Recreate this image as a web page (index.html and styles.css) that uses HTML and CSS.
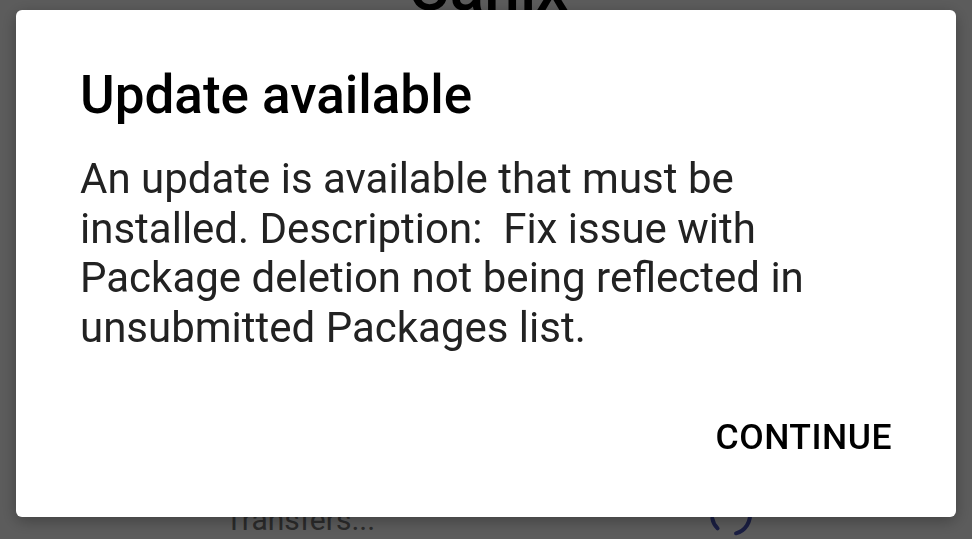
FILE: index.html
```html
<!DOCTYPE html>
<html lang="en">
<head>
    <meta charset="UTF-8">
    <meta name="viewport" content="width=device-width, initial-scale=1.0">
    <title>Canix</title>
    <link rel="stylesheet" href="styles.css">
</head>
<body>
    <div class="app">
        <div class="app-title">Canix</div>
        <div class="status-row">
            <span class="status-text">Transfers...</span>
            <svg class="spinner" width="48" height="48" viewBox="0 0 48 48">
                <circle cx="24" cy="24" r="19" fill="none" stroke="#4a55b8" stroke-width="4"
                        stroke-linecap="round" stroke-dasharray="27.5 19.9 11.6 200" transform="rotate(351 24 24)"/>
            </svg>
        </div>
    </div>

    <!-- dialog over dimmed screen -->
    <div class="scrim">
        <div class="dialog">
            <h1 class="dialog-title">Update available</h1>
            <p class="dialog-body">An update is available that must be installed. Description:&nbsp; Fix issue with Package deletion not being reflected in unsubmitted Packages list.</p>
            <div class="dialog-actions">
                <button class="dialog-button">CONTINUE</button>
            </div>
        </div>
    </div>
</body>
</html>
```

FILE: styles.css
```css
body {
    font-family: 'Roboto', 'Noto Sans', sans-serif;
    margin: 0;
    padding: 0;
    width: 972px;
    height: 539px;
    overflow: hidden;
    background: #fff;
}

.app {
    height: 539px;
    display: flex;
    flex-direction: column;
    justify-content: space-between;
}

.app-title {
    font-size: 64px;
    line-height: 64px;
    font-weight: 500;
    margin-top: -43px;
    padding-left: 408px;
    color: #000;
}

.status-row {
    display: flex;
    align-items: flex-start;
    padding-left: 225px;
    height: 48px;
}

.status-text {
    font-size: 30px;
    line-height: 36px;
    margin-top: 11px;
    color: #777;
    width: 482px;
}

.scrim {
    position: fixed;
    inset: 0;
    background: rgba(0, 0, 0, 0.64);
    padding: 10px 16px 22px;
    display: flex;
}

.dialog {
    flex: 1;
    background: #fff;
    border-radius: 6px;
    box-shadow: 0 4px 16px rgba(0, 0, 0, 0.3);
    padding: 54px 64px 60px;
    display: flex;
    flex-direction: column;
}

.dialog-title {
    margin: 0;
    font-size: 53px;
    line-height: 62px;
    font-weight: 500;
    color: #000;
}

.dialog-body {
    margin: 28px 0 0;
    font-size: 42px;
    line-height: 49.5px;
    color: #222;
}

.dialog-actions {
    margin-top: auto;
    display: flex;
    justify-content: flex-end;
}

.dialog-button {
    font-family: inherit;
    font-size: 35.5px;
    line-height: 40px;
    font-weight: 500;
    letter-spacing: 0.5px;
    color: #000;
    background: none;
    border: none;
    padding: 0;
}
```
